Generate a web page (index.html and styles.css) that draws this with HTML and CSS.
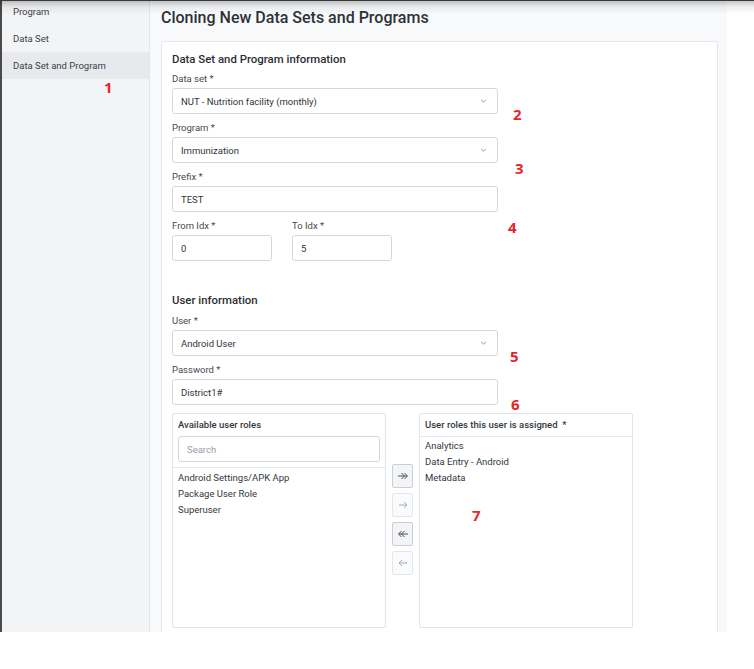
FILE: index.html
```html
<!DOCTYPE html>
<html lang="en">
<head>
<meta charset="utf-8">
<title>Cloning New Data Sets and Programs</title>
<link rel="stylesheet" href="styles.css">
</head>
<body>
<div class="topshade"></div>
<div class="app">
  <aside class="sidebar">
    <nav class="nav">
      <a class="nav-item">Program</a>
      <a class="nav-item">Data Set</a>
      <a class="nav-item active">Data Set and Program</a>
    </nav>
  </aside>
  <main class="main">
    <h1 class="title">Cloning New Data Sets and Programs</h1>
    <section class="card">
      <h2 class="section-title">Data Set and Program information</h2>
      <div class="field">
        <label class="label">Data set *</label>
        <div class="control wide select"><span>NUT - Nutrition facility (monthly)</span><svg class="chev" viewBox="0 0 8 5" width="7" height="4"><path d="M1 1l3 3 3-3"/></svg></div>
      </div>
      <div class="field">
        <label class="label">Program *</label>
        <div class="control wide select"><span>Immunization</span><svg class="chev" viewBox="0 0 8 5" width="7" height="4"><path d="M1 1l3 3 3-3"/></svg></div>
      </div>
      <div class="field">
        <label class="label">Prefix *</label>
        <div class="control wide">TEST</div>
      </div>
      <div class="row">
        <div class="field">
          <label class="label">From Idx *</label>
          <div class="control narrow">0</div>
        </div>
        <div class="field">
          <label class="label">To Idx *</label>
          <div class="control narrow">5</div>
        </div>
      </div>

      <h2 class="section-title section-gap">User information</h2>
      <div class="field">
        <label class="label">User *</label>
        <div class="control wide select"><span>Android User</span><svg class="chev" viewBox="0 0 8 5" width="7" height="4"><path d="M1 1l3 3 3-3"/></svg></div>
      </div>
      <div class="field">
        <label class="label">Password *</label>
        <div class="control wide">District1#</div>
      </div>

      <div class="transfer">
        <div class="listbox">
          <div class="listbox-head with-search">
            <div class="listbox-title">Available user roles</div>
            <div class="control search">Search</div>
          </div>
          <ul class="options">
            <li>Android Settings/APK App</li>
            <li>Package User Role</li>
            <li>Superuser</li>
          </ul>
        </div>
        <div class="actions">
          <button class="tbtn"><svg viewBox="0 0 12 8" width="12" height="8"><path d="M1 4h9M4.5 1l3 3-3 3M7.5 1l3 3-3 3"/></svg></button>
          <button class="tbtn off"><svg viewBox="0 0 12 8" width="12" height="8"><path d="M2 4h8M7 1l3 3-3 3"/></svg></button>
          <button class="tbtn"><svg viewBox="0 0 12 8" width="12" height="8"><path d="M11 4H2M7.5 1l-3 3 3 3M4.5 1l-3 3 3 3"/></svg></button>
          <button class="tbtn off"><svg viewBox="0 0 12 8" width="12" height="8"><path d="M10 4H2M5 1L2 4l3 3"/></svg></button>
        </div>
        <div class="listbox">
          <div class="listbox-head">
            <div class="listbox-title">User roles this user is assigned &nbsp;*</div>
          </div>
          <ul class="options assigned">
            <li>Analytics</li>
            <li>Data Entry - Android</li>
            <li>Metadata</li>
          </ul>
        </div>
      </div>
    </section>
  </main>
</div>
<span class="mark m1">1</span>
<span class="mark m2">2</span>
<span class="mark m3">3</span>
<span class="mark m4">4</span>
<span class="mark m5">5</span>
<span class="mark m6">6</span>
<span class="mark m7">7</span>
</body>
</html>
```
FILE: styles.css
```css
html, body {
  margin: 0;
  padding: 0;
  background: #ffffff;
}
body {
  font-family: Roboto, "Liberation Sans", Arial, sans-serif;
  color: #333;
  width: 754px;
  height: 669px;
  position: relative;
  overflow: hidden;
}
.topshade {
  position: absolute;
  top: 0;
  left: 0;
  right: 0;
  height: 14px;
  background: linear-gradient(to bottom, #3a3a3a 0, #3a3a3a 1px, rgba(0,0,0,0.22) 1px, rgba(0,0,0,0.06) 7px, rgba(0,0,0,0) 14px);
  z-index: 5;
  pointer-events: none;
}
.app {
  position: relative;
  display: flex;
  width: 725px;
  height: 632px;
  border-left: 2px solid #4a4a4a;
  overflow: hidden;
}
.app::before {
  content: "";
  position: absolute;
  left: -2px;
  bottom: 0;
  width: 2px;
  height: 15px;
  background: #2f6fb3;
}
.sidebar {
  width: 147px;
  flex: none;
  background: #f3f4f6;
  border-right: 1px solid #e4e6ea;
}
.nav {
  display: flex;
  flex-direction: column;
  margin-top: -2px;
}
.nav-item {
  display: block;
  padding: 7px 11px;
  line-height: 13px;
  font-size: 9.5px;
  color: #3c4149;
}
.nav-item.active {
  background: #e7e9ed;
}
.main {
  flex: 1;
  background: #f8f9fb;
  padding: 0 9px 0 11px;
  min-width: 0;
}
.title {
  margin: 6px 0 11px;
  font-size: 16px;
  line-height: 24px;
  font-weight: 500;
  color: #2e3136;
}
.card {
  background: #fff;
  border: 1px solid #e4e7ec;
  border-radius: 3px;
  padding: 10px 10px 40px;
}
.section-title {
  margin: 0 0 7px;
  font-size: 11.4px;
  line-height: 14px;
  font-weight: 500;
  color: #2b2e33;
}
.section-gap {
  margin-top: 24px;
  margin-bottom: 8px;
}
.field {
  display: flex;
  flex-direction: column;
  gap: 3px;
  margin-bottom: 8px;
}
.label {
  font-size: 9.5px;
  line-height: 12px;
  color: #454a52;
}
.control {
  box-sizing: border-box;
  height: 26px;
  border: 1px solid #d4d8dd;
  border-radius: 3px;
  background: #fff;
  padding: 0 8px;
  display: flex;
  align-items: center;
  font-size: 9.5px;
  color: #30343a;
}
.wide { width: 326px; }
.narrow { width: 100px; }
.select {
  justify-content: space-between;
  padding-right: 10px;
}
.chev {
  fill: none;
  stroke: #7a7f87;
  stroke-width: 1;
}
.row {
  display: flex;
  gap: 20px;
}
.transfer {
  display: flex;
  gap: 6px;
  height: 215px;
}
.listbox {
  box-sizing: border-box;
  width: 214px;
  height: 215px;
  border: 1px solid #e1e4e8;
  border-radius: 2px;
  background: #fff;
}
.listbox-head {
  padding: 5px 5px 5px;
  border-bottom: 1px solid #e5e8ec;
}
.listbox-head.with-search {
  padding-bottom: 5px;
}
.listbox-title {
  font-size: 9.5px;
  line-height: 12px;
  font-weight: 500;
  color: #33373d;
}
.search {
  width: 100%;
  margin-top: 5px;
  color: #9aa0a8;
  padding-left: 8px;
}
.options {
  list-style: none;
  margin: 0;
  padding: 2px 5px;
}
.options.assigned {
  padding-top: 1px;
}
.options li {
  font-size: 9.5px;
  line-height: 16px;
  color: #33373d;
}
.actions {
  display: flex;
  flex-direction: column;
  gap: 5px;
  padding-top: 51px;
}
.tbtn {
  width: 21px;
  height: 24px;
  padding: 0;
  display: flex;
  align-items: center;
  justify-content: center;
  background: #f3f4f6;
  border: 1px solid #c9ced5;
  border-radius: 2px;
}
.tbtn svg {
  fill: none;
  stroke: #4a4e55;
  stroke-width: 1;
}
.tbtn.off {
  background: #fafbfc;
  border-color: #e3e6ea;
}
.tbtn.off svg {
  stroke: #a7acb3;
}
.mark {
  position: absolute;
  font-family: "Open Sans", Roboto, sans-serif;
  font-weight: 700;
  font-size: 15px;
  line-height: 16px;
  color: #e3262b;
  z-index: 6;
}
.m1 { left: 104px; top: 79px; }
.m2 { left: 513px; top: 106px; }
.m3 { left: 515px; top: 160px; }
.m4 { left: 508px; top: 219px; }
.m5 { left: 510px; top: 348px; }
.m6 { left: 511px; top: 396px; }
.m7 { left: 472px; top: 507px; }
```
